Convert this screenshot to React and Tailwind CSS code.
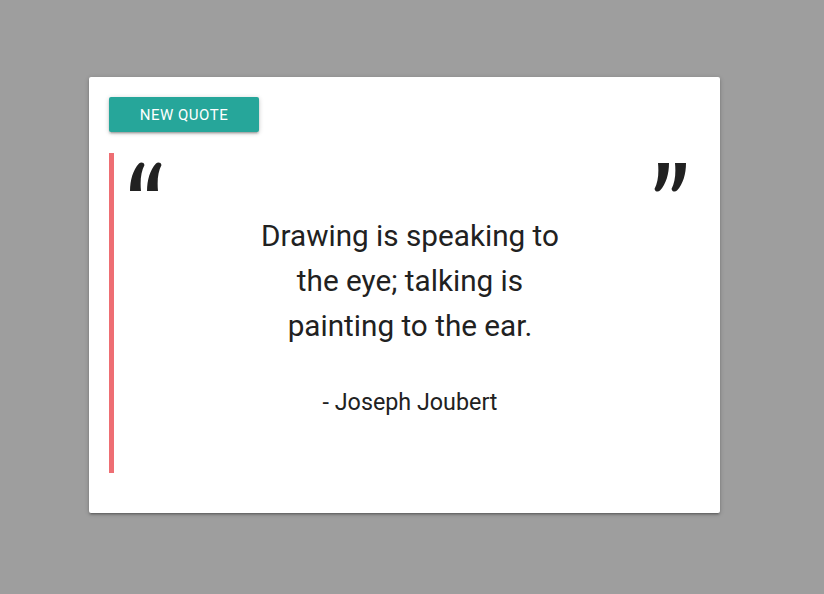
import React from 'react';

function QuoteMark({ close = false }) {
  return (
    <svg
      width="36"
      height="30"
      viewBox="0 0 36 30"
      className={close ? 'rotate-180' : ''}
      aria-hidden="true"
    >
      <path
        d="M2 29 C2 18 5 8 11 1.5 Q13 -0.3 15.5 1 L16.5 3 C13 10 12 18 13 29 Z"
        fill="#212121"
      />
      <path
        d="M19 29 C19 18 22 8 28 1.5 Q30 -0.3 32.5 1 L33.5 3 C30 10 29 18 30 29 Z"
        fill="#212121"
      />
    </svg>
  );
}

export default function App() {
  return (
    <div className="min-h-[594px] w-full bg-[#9e9e9e] pt-[77px] pl-[89px] font-['Roboto',sans-serif]">
      <div className="w-[631px] rounded-[2px] bg-white p-[20px] pb-[40px] shadow-[0_2px_2px_0_rgba(0,0,0,0.14),0_3px_1px_-2px_rgba(0,0,0,0.12),0_1px_5px_0_rgba(0,0,0,0.2)]">
        <button className="h-[35px] w-[150px] rounded-[2px] bg-[#26a69a] pt-[1px] text-[15px] tracking-[0.5px] text-white uppercase shadow-[0_2px_2px_0_rgba(0,0,0,0.14),0_3px_1px_-2px_rgba(0,0,0,0.12),0_1px_5px_0_rgba(0,0,0,0.2)]">
          New Quote
        </button>

        <blockquote className="mt-[21px] border-l-[5px] border-[#ee6e73] pt-[9px] pb-[54px] pr-[12px] pl-[14px] text-[#212121]">
          <div className="flex items-start justify-between">
            <QuoteMark />
            <QuoteMark close />
          </div>
          <p className="mx-auto mt-[21px] w-[320px] pl-[4px] text-center text-[29.7px] leading-[45px]">
            Drawing is speaking to the eye; talking is painting to the ear.
          </p>
          <p className="mt-[38px] pl-[4px] text-center text-[23.3px] leading-[33px]">
            - Joseph Joubert
          </p>
        </blockquote>
      </div>
    </div>
  );
}
